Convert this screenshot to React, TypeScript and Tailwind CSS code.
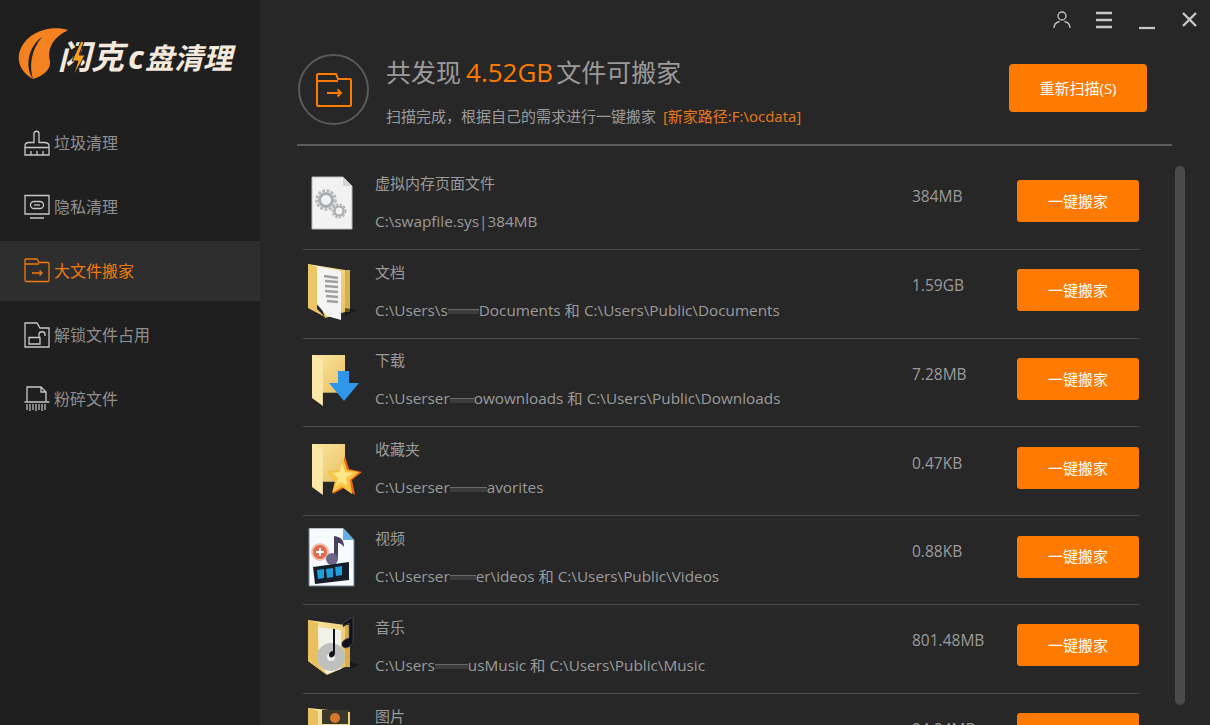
import type { ReactNode } from 'react';

const FONT = "[font-family:'Open_Sans','Noto_Sans_CJK_SC',sans-serif]";

function Smudge({ w }: { w: number }) {
  return (
    <span className="inline-block align-middle h-[5px] bg-[#3c3c3c] border-t border-[#6a6a6a] blur-[0.5px]" style={{ width: w }} />
  );
}

function FolderBack({ x = 7, y = 5, w = 33, h = 46 }: { x?: number; y?: number; w?: number; h?: number }) {
  return (
    <>
      <rect x={x} y={y} width={w} height={h * 0.82} fill="url(#fold)" />
      <path d={`M${x} ${y}L${x + w * 0.33} ${y + 5}V${y + h + 5}L${x} ${y + h - 3}Z`} fill="#fbe8a8" />
    </>
  );
}

function GearIcon() {
  return (
    <svg width="60" height="60" viewBox="0 0 60 60">
      <path d="M7 4H38L47 13V56H7Z" fill="#f2f2f2" stroke="#bbb" />
      <path d="M38 4V13H47Z" fill="#cfd6dc" />
      <circle cx="21" cy="27" r="9.500" fill="none" stroke="#b4b8bb" strokeWidth="2.500" strokeDasharray="3 1.500" />
      <circle cx="21" cy="27" r="6.500" fill="none" stroke="#a9adb0" strokeWidth="3" />
      <circle cx="34" cy="38" r="6.500" fill="none" stroke="#b4b8bb" strokeWidth="2" strokeDasharray="2.500 1.300" />
      <circle cx="34" cy="38" r="4.500" fill="none" stroke="#a9adb0" strokeWidth="2.200" />
    </svg>
  );
}

function DocsFolder() {
  return (
    <svg width="60" height="60" viewBox="0 0 60 60">
      <path d="M3 2L40 8V50L20 56Z" fill="url(#fold)" />
      <path d="M40 8H45V50H40Z" fill="#d7ad4e" />
      <path d="M10 4L36 9V58L22 54L10 40Z" fill="#f4f4f4" />
      <path d="M19 14L33 16M20 19L33 20M20 24L33 25M20 29L33 30M21 34L33 35M22 39L33 40" stroke="#a0a0a0" strokeWidth="2.500" />
      <path d="M3 2L12 5V47L20 55L3 46Z" fill="#ecc566" />
      <path d="M40 46L52 48L40 54Z" fill="#111" opacity="0.6" />
    </svg>
  );
}

function DownloadFolder() {
  return (
    <svg width="60" height="60" viewBox="0 0 60 60">
      <FolderBack />
      <path d="M33 21H44V33H54L39 51L24 33H33Z" fill="#2f96ea" />
    </svg>
  );
}

function StarFolder() {
  return (
    <svg width="60" height="60" viewBox="0 0 60 60">
      <FolderBack />
      <path d="M40 17L44 30L57 33L47 41L50 56L39 49L28 55L31 42L23 33L35 31Z" fill="#e8641f" />
      <path d="M38 18L42 31L54 33L45 41L47 55L37 48L27 54L30 42L22 33L34 31Z" fill="#f8c63f" />
      <path d="M37 24L40 33L48 34L41 39L42 47L36 43L31 47L33 39L27 34L34 33Z" fill="#fde58a" />
    </svg>
  );
}

function VideoDoc() {
  return (
    <svg width="60" height="60" viewBox="0 0 60 60">
      <path d="M4 0H38L49 12V58H4Z" fill="#f7fbff" stroke="#6f7f96" />
      <path d="M38 0V12H49Z" fill="#63b0e6" />
      <circle cx="15" cy="24" r="8" fill="#e26a4c" stroke="#f1c0ae" strokeWidth="2" />
      <path d="M11 24H19M15 20V28" stroke="#fff" strokeWidth="2" />
      <path d="M29 30V8C36 9 39 12 39 19C36 15 34 15 33 15V31" fill="#494062" />
      <circle cx="27" cy="31" r="6" fill="#6d6588" />
      <path d="M8 39L44 34V52L10 56Z" fill="#151d28" />
      <path d="M12 42L19 41V50L13 51ZM21 41L28 40V49L22 50ZM30 39L37 38V47L31 48Z" fill="#1e9edb" />
    </svg>
  );
}

function MusicFolder() {
  return (
    <svg width="60" height="60" viewBox="0 0 60 60">
      <path d="M3 3L40 8V50L22 58L3 44Z" fill="url(#fold)" />
      <path d="M40 8H45V50H40Z" fill="#d7ad4e" />
      <path d="M13 10L36 13V52L22 57L14 46Z" fill="#f1f1e8" />
      <circle cx="26" cy="40" r="14" fill="#bfc0bd" />
      <circle cx="26" cy="40" r="4" fill="#eee" />
      <path d="M3 3L13 6V48L22 58L3 44Z" fill="#e8c05f" />
      <path d="M38 6L48 0V24C48 28 42 33 38 30C35 27 38 22 44 21V6L38 10Z" fill="#12131a" stroke="#555a66" strokeWidth="0.600" />
      <path d="M30 12V36C30 41 24 42 24 38C24 35 27 34 28 34V12Z" fill="#12131a" />
      <path d="M45 44L54 48L45 52Z" fill="#111" opacity="0.6" />
    </svg>
  );
}

function PictureFolder() {
  return (
    <svg width="60" height="60" viewBox="0 0 60 60">
      <path d="M3 2L45 6V50L22 58L3 44Z" fill="url(#fold)" />
      <rect x="17" y="4" width="26" height="14" fill="#3a3a2c" />
      <circle cx="30" cy="12" r="5" fill="#d9782c" />
      <path d="M3 2L13 5V48L3 44Z" fill="#e8c05f" />
    </svg>
  );
}

const NAV = [
  {
    label: '垃圾清理',
    icon: (
      <svg width="26" height="26" viewBox="0 0 26 26" fill="none" stroke="currentColor" strokeWidth="1.300">
        <path d="M1 25V16C1 13.500 3 12.500 5 12.500H10V3.500C10 .5 15 .5 15 3.500V12.500H20C23 12.500 25 13.500 25 16V25ZM1 17.500H25M7 25V21M13 25V21M19 25V21" />
      </svg>
    ),
  },
  {
    label: '隐私清理',
    icon: (
      <svg width="26" height="26" viewBox="0 0 26 26" fill="none" stroke="currentColor" strokeWidth="1.300">
        <path d="M1 1.500H25V20H1ZM6 24H20" />
        <rect x="6.500" y="7.500" width="13" height="7" rx="3.500" />
        <path d="M10 11H16" />
      </svg>
    ),
  },
  {
    label: '大文件搬家',
    active: true,
    icon: (
      <svg width="26" height="26" viewBox="0 0 26 26" fill="none" stroke="currentColor" strokeWidth="1.300">
        <path d="M1 6V2C1 1.500 1.500 1 2 1H13L15 4.500H24C24.500 4.500 25 5 25 5.500V22C25 23 24.500 23.500 24 23.500H2C1.500 23.500 1 23 1 22V6H15" />
        <path d="M8 15H18M15.500 12.500L18 15L15.500 17.500" />
      </svg>
    ),
  },
  {
    label: '解锁文件占用',
    icon: (
      <svg width="26" height="26" viewBox="0 0 26 26" fill="none" stroke="currentColor" strokeWidth="1.300">
        <path d="M1 1H13L16 6H25V25H1ZM5 15.500H16V22H5ZM15 15.500V12C15 9 21 9 21 12V14" />
      </svg>
    ),
  },
  {
    label: '粉碎文件',
    icon: (
      <svg width="26" height="26" viewBox="0 0 26 26" fill="none" stroke="currentColor" strokeWidth="1.300">
        <path d="M3 15V1H17L22 6V15M17 1V6H22M.500 16H25.500" />
        <path d="M3 18V24M6 18V25M9 18V24M12 18V25M15 18V24M18 18V25M21 18V24" strokeWidth="1.200" />
      </svg>
    ),
  },
];

const ROWS: { title: string; path: ReactNode; size: string; icon: ReactNode }[] = [
  { title: '虚拟内存页面文件', path: 'C:\\swapfile.sys|384MB', size: '384MB', icon: <GearIcon /> },
  {
    title: '文档',
    path: <>C:\Users\s<Smudge w={31} />Documents 和 C:\Users\Public\Documents</>,
    size: '1.59GB',
    icon: <DocsFolder />,
  },
  {
    title: '下载',
    path: <>C:\Userser<Smudge w={24} />owownloads 和 C:\Users\Public\Downloads</>,
    size: '7.28MB',
    icon: <DownloadFolder />,
  },
  {
    title: '收藏夹',
    path: <>C:\Userser<Smudge w={37} />avorites</>,
    size: '0.47KB',
    icon: <StarFolder />,
  },
  {
    title: '视频',
    path: <>C:\Userser<Smudge w={26} />er\ideos 和 C:\Users\Public\Videos</>,
    size: '0.88KB',
    icon: <VideoDoc />,
  },
  {
    title: '音乐',
    path: <>C:\Users<Smudge w={33} />usMusic 和 C:\Users\Public\Music</>,
    size: '801.48MB',
    icon: <MusicFolder />,
  },
  {
    title: '图片',
    path: <>C:\Users\Pictures 和 C:\Users\Public\Pictures</>,
    size: '94.94MB',
    icon: <PictureFolder />,
  },
];

export default function App() {
  return (
    <div className={`flex h-[725px] w-[1210px] overflow-hidden bg-[#272727] text-[#9b9b9b] ${FONT}`}>
      <svg width="0" height="0" className="absolute">
        <defs>
          <linearGradient id="fold" x1="0" y1="0" x2="1" y2="1">
            <stop offset="0" stopColor="#fbe6a2" />
            <stop offset="1" stopColor="#e9c163" />
          </linearGradient>
        </defs>
      </svg>

      {/* Sidebar */}
      <aside className="flex w-[260px] shrink-0 flex-col bg-[#1f1f1f]">
        <div className="relative h-[113px] shrink-0">
          <svg width="60" height="60" viewBox="0 0 60 60" className="absolute left-[15px] top-[24px]">
            <path d="M53 6C38 1 10 6 4 30C2 42 10 51 18 55C28 52 36 46 35 37C33 28 34 16 53 6Z" fill="#f58220" />
            <path d="M27 13C14 22 9 42 18 55C14 42 16 26 27 13Z" fill="#1f1f1f" />
          </svg>
          <div className="absolute left-[58px] top-[39px] flex items-baseline whitespace-nowrap text-[#f4e9dc] italic font-bold leading-[36px]">
            <span className="text-[33px]">闪克</span>
            <span className="ml-[4px] text-[33px]">c</span>
            <span className="ml-[1px] text-[29px]">盘清理</span>
          </div>
          <svg width="16" height="36" viewBox="0 0 16 36" className="absolute left-[70px] top-[41px]">
            <path d="M11 0L2 20H8L3 36L15 14H9L14 1Z" fill="#f7a11a" stroke="#1f1f1f" strokeWidth="1" />
          </svg>
        </div>
        <nav className="flex flex-col gap-[4px]">
          {NAV.map(item => (
            <div
              key={item.label}
              className={`flex h-[60px] items-center gap-[4px] pl-[24px] text-base ${
                item.active ? 'bg-[#2e2e2e] text-[#f07a10]' : 'text-[#8f8f8f]'
              }`}
            >
              <span className={`flex ${item.active ? 'text-[#f07a10]' : 'text-[#c8c8c8]'}`}>{item.icon}</span>
              <span>{item.label}</span>
            </div>
          ))}
        </nav>
      </aside>

      {/* Main */}
      <main className="flex min-w-0 flex-1 flex-col">
        <div className="flex h-[40px] shrink-0 items-center justify-end gap-[22px] pr-[11px] text-[#c8c8c8]">
          <svg width="20" height="20" viewBox="0 0 20 20" fill="none" stroke="currentColor" strokeWidth="1.300">
            <circle cx="9" cy="6" r="4" />
            <path d="M1 18C1 14 4 12 6.500 11.500M17 18C17 14 14 12 11.500 11.500" />
          </svg>
          <svg width="20" height="20" viewBox="0 0 20 20" fill="none" stroke="currentColor" strokeWidth="2.400">
            <path d="M1 3H17M1 10H17M1 17H17" />
          </svg>
          <svg width="20" height="20" viewBox="0 0 20 20" fill="none" stroke="currentColor" strokeWidth="2.200">
            <path d="M2 18H18" />
          </svg>
          <svg width="20" height="20" viewBox="0 0 20 20" fill="none" stroke="currentColor" strokeWidth="2.400">
            <path d="M4 3L17 16M17 3L4 16" />
          </svg>
        </div>

        {/* Header */}
        <div className="flex h-[104px] shrink-0 items-start pl-[38px] pr-[63px] pt-[14px]">
          <div className="flex h-[71px] w-[71px] shrink-0 items-center justify-center rounded-full border-2 border-[#5a5a5a] text-[#ff7a00]">
            <svg width="36" height="34" viewBox="0 0 36 34" fill="none" stroke="currentColor" strokeWidth="2">
              <path d="M1 8V2C1 1.500 1.500 1 2 1H20L22 6H34C34.500 6 35 6.500 35 7V32C35 32.500 34.500 33 34 33H2C1.500 33 1 32.500 1 32V8H22" />
              <path d="M11 20H25M21.500 16.500L25 20L21.500 23.500" />
            </svg>
          </div>
          <div className="ml-[17px] flex-1">
            <div className="mt-[1px] flex items-center gap-[5px] text-[25px] leading-[34px] text-[#9b9b9b]">
              <span>共发现</span>
              <span className="text-[26px] text-[#ff7a00]">4.52GB</span>
              <span className="-ml-[2px]">文件可搬家</span>
            </div>
            <div className="mt-[17px] text-[15px] leading-[20px]">
              扫描完成，根据自己的需求进行一键搬家 <span className="ml-[3px] text-[#e8791a]">[新家路径:F:\ocdata]</span>
            </div>
          </div>
          <button className="mt-[10px] h-[48px] w-[138px] rounded-[4px] bg-[#ff7a00] text-[15px] text-white">
            重新扫描(S)
          </button>
        </div>

        <div className="ml-[37px] mr-[38px] h-[2px] shrink-0 bg-[#5c5c5c]" />

        {/* List */}
        <div className="flex min-h-0 flex-1 pt-[15px]">
          <div className="ml-[43px] w-[837px] shrink-0">
            {ROWS.map(row => (
              <div key={row.title} className="flex h-[88.8px] items-center border-b border-[#48484d] pb-[4px]">
                <div className="w-[72px] shrink-0 pl-[2px]">{row.icon}</div>
                <div className="mb-[2px] min-w-0 flex-1 text-[15px] leading-[22px]">
                  <div className="mb-[16px]">{row.title}</div>
                  <div className="whitespace-nowrap text-[15.3px]">{row.path}</div>
                </div>
                <div className="mb-[12px] w-[105px] shrink-0 text-[15.5px]">{row.size}</div>
                <button className="mb-[3px] mr-[1px] h-[42px] w-[122px] shrink-0 rounded-[3px] bg-[#ff7a00] text-[15px] text-white">
                  一键搬家
                </button>
              </div>
            ))}
          </div>
          <div className="ml-[35px] mt-[5px] h-[539px] w-[10px] shrink-0 rounded-full bg-[#4a4a4a]" />
        </div>
      </main>
    </div>
  );
}
